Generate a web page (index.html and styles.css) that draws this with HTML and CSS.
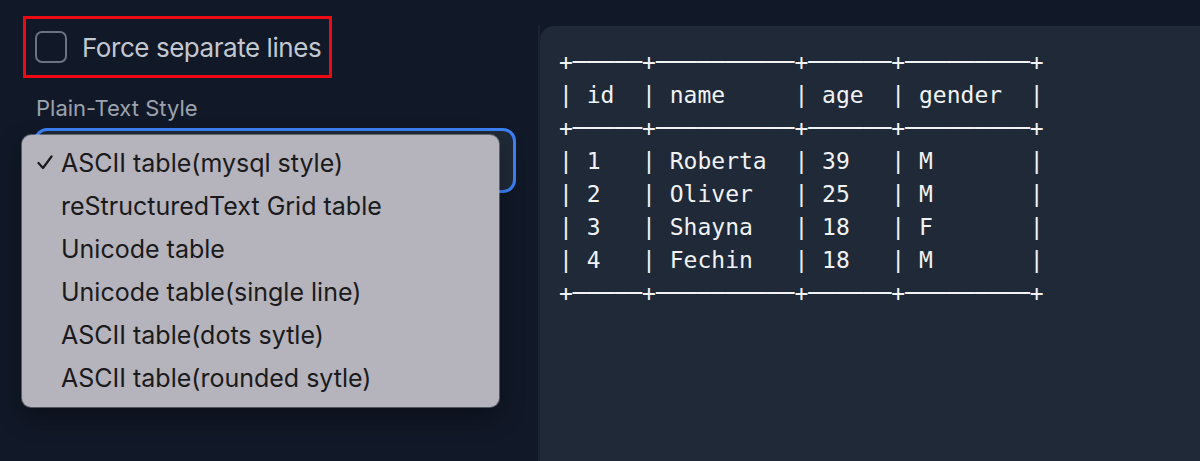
FILE: index.html
```html
<!DOCTYPE html>
<html>
<head>
<meta charset="utf-8">
<link rel="stylesheet" href="styles.css">
</head>
<body>
<div class="left">
  <div class="force">
    <span class="checkbox"></span>
    <span class="force-text">Force separate lines</span>
  </div>
  <div class="label">Plain-Text Style</div>
  <div class="select"></div>
  <ul class="menu">
    <li class="item"><span class="check"><svg width="16" height="15" viewBox="0 0 16 15"><polyline points="1.5,8 6,13 14.5,1.5" fill="none" stroke="#1a1a1c" stroke-width="2.2" stroke-linecap="round" stroke-linejoin="round"/></svg></span>ASCII table(mysql style)</li>
    <li class="item"><span class="check"></span>reStructuredText Grid table</li>
    <li class="item"><span class="check"></span>Unicode table</li>
    <li class="item"><span class="check"></span>Unicode table(single line)</li>
    <li class="item"><span class="check"></span>ASCII table(dots sytle)</li>
    <li class="item"><span class="check"></span>ASCII table(rounded sytle)</li>
  </ul>
</div>
<div class="right">
  <div class="divider"></div>
  <div class="panel">
<pre class="output">+─────+──────────+──────+─────────+
| id  | name     | age  | gender  |
+─────+──────────+──────+─────────+
| 1   | Roberta  | 39   | M       |
| 2   | Oliver   | 25   | M       |
| 3   | Shayna   | 18   | F       |
| 4   | Fechin   | 18   | M       |
+─────+──────────+──────+─────────+</pre>
  </div>
</div>
</body>
</html>
```
FILE: styles.css
```css
html, body {
  margin: 0;
  padding: 0;
}
body {
  width: 1200px;
  height: 461px;
  overflow: hidden;
  background: #111827;
  display: flex;
  font-family: Inter, "Liberation Sans", sans-serif;
}
.left {
  width: 538px;
  flex: none;
  box-sizing: border-box;
  padding: 16px 0 0 23px;
  position: relative;
}
.force {
  box-sizing: border-box;
  width: 309px;
  height: 62px;
  border: 3px solid #ee0a12;
  display: flex;
  align-items: center;
  padding-left: 9px;
  gap: 15px;
}
.checkbox {
  box-sizing: border-box;
  width: 32px;
  height: 32px;
  border: 2.5px solid #6b7280;
  border-radius: 7px;
  flex: none;
}
.force-text {
  font-size: 26px;
  letter-spacing: -0.45px;
  color: #c3c8d0;
  white-space: nowrap;
}
.label {
  margin: 18px 0 0 13px;
  font-size: 22px;
  line-height: 24px;
  color: #9ca3af;
}
.select {
  box-sizing: border-box;
  margin: 8px 0 0 11px;
  width: 482px;
  height: 65px;
  border: 3px solid #3b82f6;
  border-radius: 13px;
  background: #1f2937;
}
.menu {
  position: absolute;
  left: 22px;
  top: 135px;
  width: 477px;
  height: 272px;
  box-sizing: border-box;
  margin: 0;
  padding: 6px 0 0 0;
  list-style: none;
  background: #b5b3bb;
  border-radius: 9px;
  box-shadow: 0 0 0 1px rgba(220, 218, 226, 0.35), 0 10px 24px rgba(0, 0, 0, 0.35);
}
.item {
  display: flex;
  align-items: center;
  height: 43px;
  font-size: 25px;
  color: #1a1a1c;
  white-space: nowrap;
}
.check {
  width: 39px;
  flex: none;
  box-sizing: border-box;
  padding-left: 15px;
  display: flex;
  align-items: center;
}
.right {
  flex: 1;
  margin-top: 26px;
  display: flex;
}
.divider {
  width: 2px;
  flex: none;
  background: #1b2231;
}
.panel {
  flex: 1;
  background: #1f2937;
  border-top-left-radius: 14px;
  padding: 20px 0 0 19px;
}
.output {
  margin: 0;
  font-family: "DejaVu Sans Mono", monospace;
  font-size: 23px;
  line-height: 33px;
  color: #f1f2f4;
}
```
